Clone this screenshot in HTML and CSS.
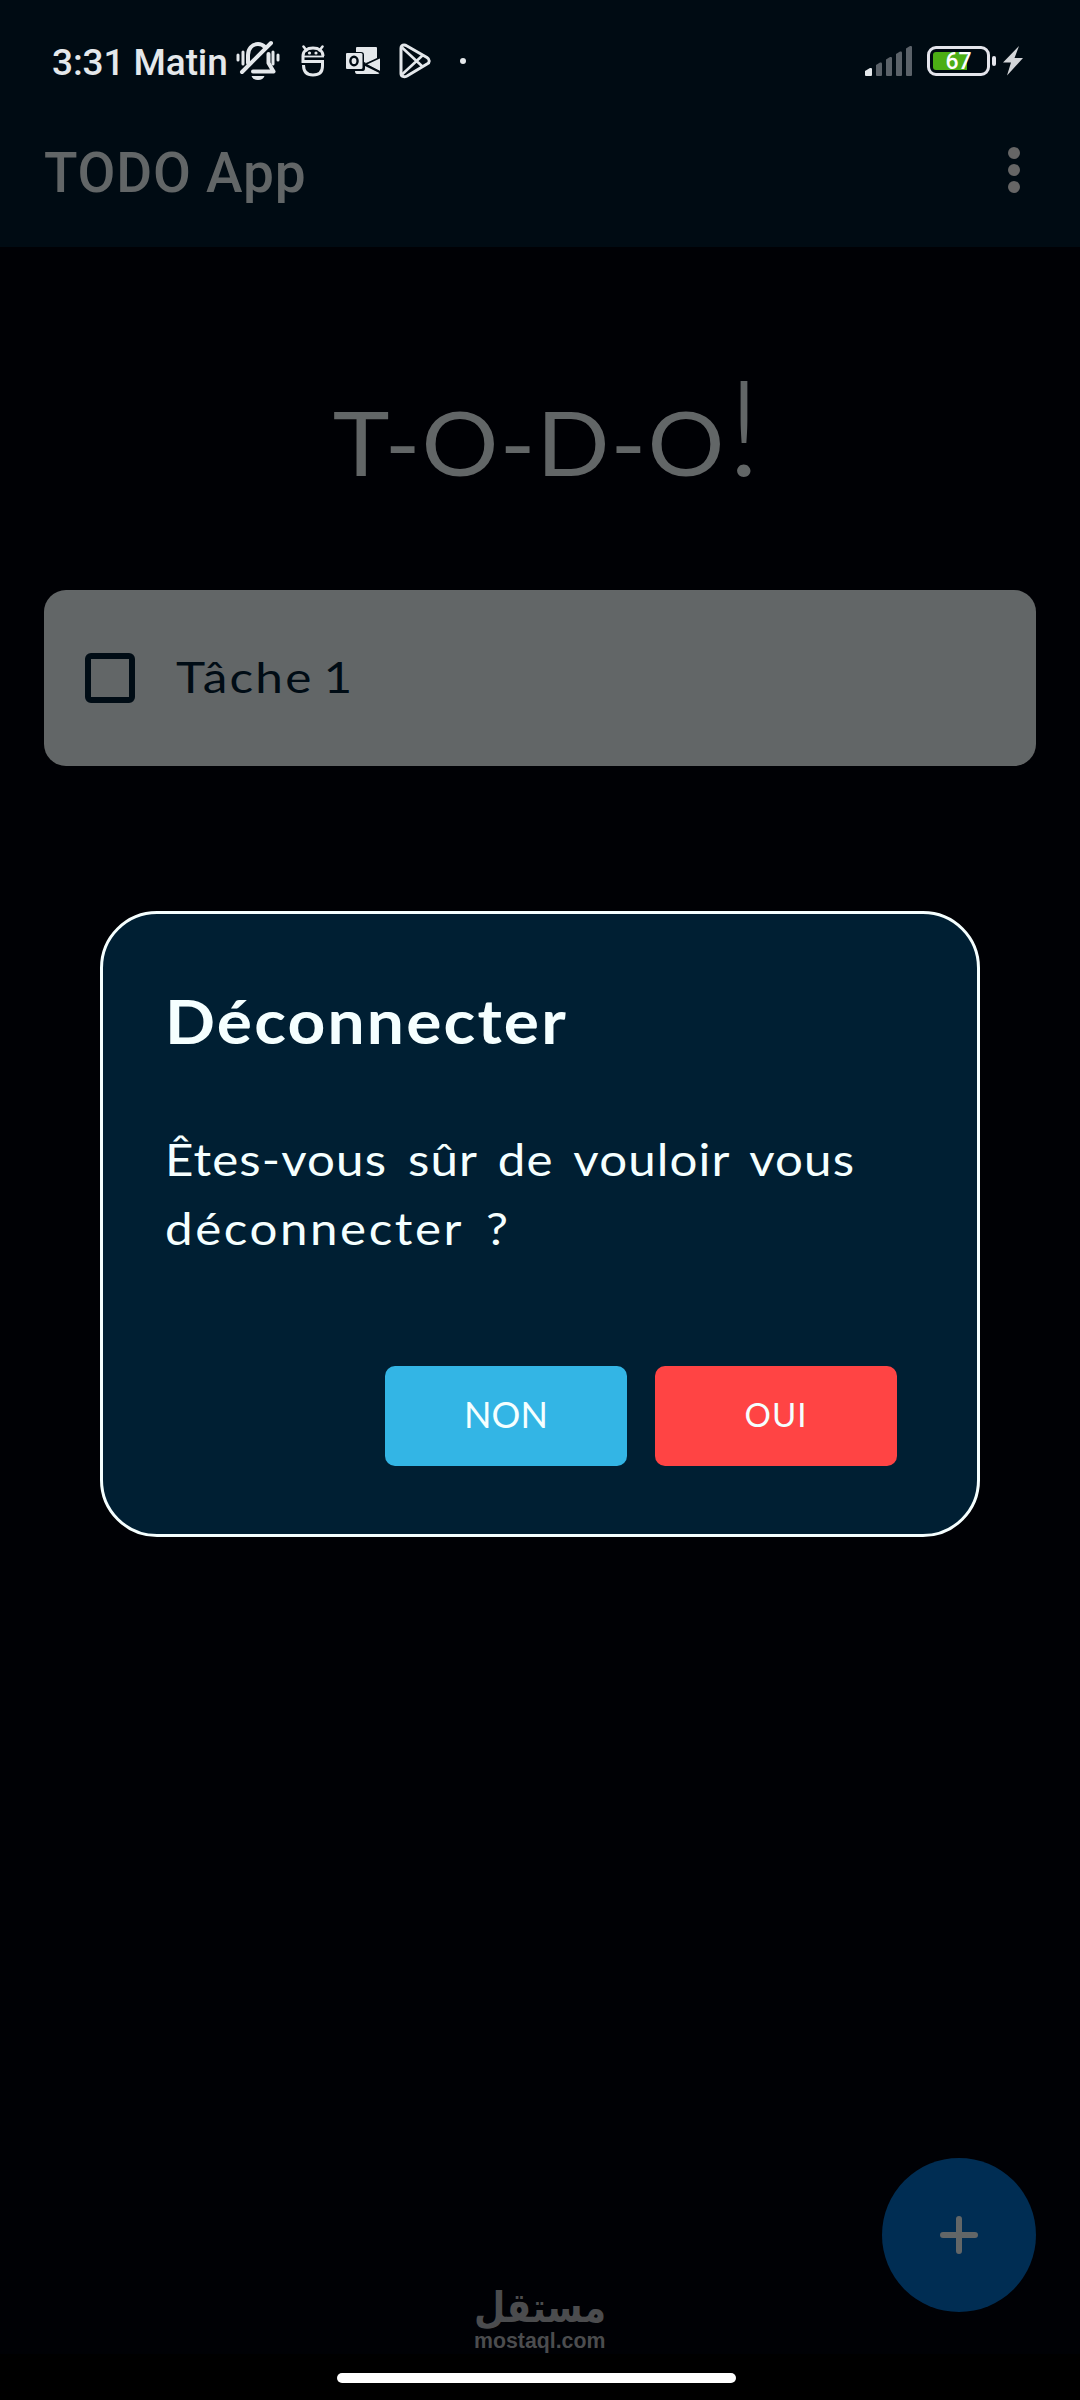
FILE: index.html
```html
<!DOCTYPE html>
<html lang="fr">
<head>
    <meta charset="UTF-8">
    <meta name="viewport" content="width=device-width, initial-scale=1.0">
    <title>TODO App</title>
    <link rel="stylesheet" href="styles.css">
</head>
<body>
    <div class="screen">
        <header class="header">
            <!-- Barre d'état -->
            <div class="status-bar">
                <div class="status-left">
                    <span class="clock">3:31 Matin</span>
                    <svg class="icon-bell" width="46" height="42" viewBox="0 0 46 42" fill="none" stroke="#e4e8eb" stroke-linecap="round">
                        <path d="M3 15v5M8 12v12M38 12v12M43 15v5" stroke-width="3"/>
                        <path d="M13 23v-8c0-6 4-11 10-11 3 0 5 1 7 3" stroke-width="4"/>
                        <path d="M33.500 14v9l5 8.500H18" stroke-width="4" stroke-linejoin="round"/>
                        <path d="M36 3L7 32" stroke-width="4"/>
                        <path d="M16.500 36h13c-1 2.500-3 4-6.500 4s-5.500-1.500-6.500-4z" fill="#e4e8eb" stroke="none"/>
                    </svg>
                    <svg class="icon-s" width="24" height="32" viewBox="0 0 24 32" fill="none" stroke="#e4e8eb">
                        <path d="M2.500 1.500l3 4M21.500 1.500l-3 4" stroke-width="2.500" stroke-linecap="round"/>
                        <path d="M22 11C22 6 18 3 12 3S2 6 2 11" stroke-width="3"/>
                        <path d="M1 11.500h22" stroke-width="1.800"/>
                        <path d="M2 11v5.500h19.500V21c0 6-3.500 9-9.500 9S2.500 27 2.500 20" stroke-width="3"/>
                        <circle cx="8.500" cy="8" r="1.600" fill="#e4e8eb" stroke="none"/>
                        <circle cx="15" cy="8" r="1.600" fill="#e4e8eb" stroke="none"/>
                    </svg>
                    <svg class="icon-mail" width="36" height="28" viewBox="0 0 36 28" fill="#e4e8eb">
                        <path d="M10 1q0-1 1-1h19q1 0 1 1v11l-11 4-2-1V8q0-3-3-3h-5z"/>
                        <path d="M1 6h14q1.500 0 1.500 1.500v13q0 1.500-1.500 1.500H1q-1 0-1-1V7q0-1 1-1z"/>
                        <path d="M34 11v13L18.500 16.500z"/>
                        <path d="M9 24h8q2 0 2-3v-2l14.500 7q-.5 1-2 1H11q-2 0-2-3z"/>
                        <path d="M18 16.500L34 25M18 18L34 10.500" stroke="#000b13" stroke-width="1.600"/>
                        <ellipse cx="8" cy="14" rx="3.600" ry="4.300" fill="none" stroke="#000b13" stroke-width="2.400"/>
                    </svg>
                    <svg class="icon-play" width="32" height="36" viewBox="0 0 32 36" fill="none" stroke="#e4e8eb" stroke-linejoin="round">
                        <path d="M2 5.500C2 2 5 1 8 3l20 11.500c3 2 3 5 0 6.500L8 33c-3 1.500-6 .5-6-2.500z" stroke-width="3"/>
                        <path d="M3 4.500L24 24M3 31.500L24 12" stroke-width="2.600"/>
                    </svg>
                    <span class="more-dot"></span>
                </div>
                <div class="status-right">
                    <svg class="icon-signal" width="48" height="32" viewBox="0 0 48 32" fill="#5b6269">
                        <path d="M0 26l5-3q2-.5 2 1v6q0 1-1 1H1q-1 0-1-1z" fill="#e4e8eb"/>
                        <path d="M11 20l4-2.500q2-.5 2 1V30q0 1-1 1h-4q-1 0-1-1z"/>
                        <path d="M21 14.500l4-2.500q2-.5 2 1v17q0 1-1 1h-4q-1 0-1-1z"/>
                        <path d="M31 9l4-2.500q2-.5 2 1V30q0 1-1 1h-4q-1 0-1-1z"/>
                        <path d="M41 3.500L45 1q2-.5 2 1v28q0 1-1 1h-4q-1 0-1-1z"/>
                    </svg>
                    <div class="battery">
                        <div class="battery-level"></div>
                        <span class="battery-text">67</span>
                    </div>
                    <span class="battery-cap"></span>
                    <svg class="icon-bolt" width="20" height="30" viewBox="0 0 20 30" fill="#d3d6d9">
                        <path d="M16 0L0 16.500h8L4 29.500 20 12h-8.500z"/>
                    </svg>
                </div>
            </div>
            <!-- Barre de titre -->
            <div class="toolbar">
                <h1 class="app-title">TODO App</h1>
                <div class="menu">
                    <span class="menu-dot"></span>
                    <span class="menu-dot"></span>
                    <span class="menu-dot"></span>
                </div>
            </div>
        </header>

        <main class="content">
            <h2 class="logo">T-O-D-O<span class="logo-mark">!</span></h2>
            <div class="task">
                <span class="checkbox"></span>
                <span class="task-name">Tâche 1</span>
            </div>
        </main>

        <div class="nav-bar">
            <span class="nav-handle"></span>
        </div>

        <button class="fab">
            <svg width="38" height="38" viewBox="0 0 38 38" stroke="#626667" stroke-width="6" stroke-linecap="round">
                <path d="M19 3v32M3 19h32"/>
            </svg>
        </button>

        <div class="watermark">
            <div class="watermark-ar" lang="ar">مستقل</div>
            <div class="watermark-en">mostaql.com</div>
        </div>

        <!-- Boîte de dialogue -->
        <div class="dialog">
            <h3 class="dialog-title">Déconnecter</h3>
            <p class="dialog-text"><span class="line-one">Êtes-vous sûr de vouloir vous</span><br><span class="line-two">déconnecter ?</span></p>
            <div class="dialog-actions">
                <button class="btn btn-non">NON</button>
                <button class="btn btn-oui">OUI</button>
            </div>
        </div>
    </div>
</body>
</html>
```

FILE: styles.css
```css
* {
    box-sizing: border-box;
}

body {
    margin: 0;
    background-color: #000105;
    font-family: Roboto, sans-serif;
}

h1, h2, h3, p {
    margin: 0;
    font-weight: normal;
}

button {
    border: none;
    padding: 0;
}

svg {
    display: block;
}

.screen {
    position: relative;
    width: 1080px;
    height: 2400px;
    display: flex;
    flex-direction: column;
    overflow: hidden;
}

/* En-tête */
.header {
    height: 247px;
    background-color: #000b13;
}

.status-bar {
    height: 122px;
    padding: 0 57px 0 52px;
    display: flex;
    justify-content: space-between;
    align-items: center;
}

.status-left,
.status-right {
    display: flex;
    align-items: center;
}

.status-right {
    padding-bottom: 1px;
}

.clock {
    width: 183px;
    font-size: 37px;
    font-weight: 500;
    color: #e4e8eb;
    white-space: nowrap;
    letter-spacing: -0.1px;
    padding-top: 3px;
}

.icon-s { margin-left: 20px; }
.icon-mail { margin-left: 21px; }
.icon-play { margin-left: 17px; }

.more-dot {
    width: 6px;
    height: 6px;
    margin-left: 29px;
    border-radius: 50%;
    background-color: #e4e8eb;
}

.battery {
    position: relative;
    width: 63px;
    height: 30px;
    margin-left: 14px;
    padding: 3px;
    border: 3px solid #e4e5ec;
    border-radius: 9px;
}

.battery-level {
    width: 34px;
    height: 18px;
    border-radius: 3px 0 0 3px;
    background-color: #4cae15;
}

.battery-text {
    position: absolute;
    inset: 0;
    line-height: 26px;
    text-align: center;
    font-size: 23px;
    font-weight: 500;
    color: #fff;
}

.battery-cap {
    width: 4px;
    height: 10px;
    margin-left: 2px;
    border-radius: 2px;
    background-color: #e4e5ec;
}

.icon-bolt { margin-left: 7px; }

.toolbar {
    height: 102px;
    padding: 0 60px 0 44px;
    display: flex;
    justify-content: space-between;
    align-items: center;
}

.app-title {
    font-size: 55px;
    font-weight: 500;
    color: #626667;
    letter-spacing: 0.8px;
}

.menu {
    display: flex;
    flex-direction: column;
    gap: 5px;
    margin-bottom: 6px;
}

.menu-dot {
    width: 12px;
    height: 12px;
    border-radius: 50%;
    background-color: #666;
}

/* Contenu */
.content {
    flex: 1;
    padding: 103px 44px 0;
}

.logo {
    height: 240px;
    line-height: 150px;
    text-align: center;
    font-family: Lato, sans-serif;
    font-size: 89px;
    color: #626667;
    letter-spacing: 1px;
    transform: scaleX(1.08);
}

.logo-mark {
    font-size: 134px;
    font-weight: 300;
    letter-spacing: 0;
    margin-right: -14px;
}

.task {
    height: 176px;
    padding-left: 41px;
    display: flex;
    align-items: center;
    border-radius: 22px;
    background-color: #626667;
}

.checkbox {
    width: 50px;
    height: 50px;
    border: 6px solid #000c15;
    border-radius: 6px;
}

.task-name {
    margin-left: 41px;
    padding-bottom: 3px;
    font-family: Lato, sans-serif;
    font-size: 42px;
    color: #000c15;
    letter-spacing: 1.8px;
    word-spacing: -4px;
    transform: scaleX(1.18);
    transform-origin: left;
}

/* Bouton flottant */
.fab {
    position: absolute;
    right: 44px;
    bottom: 88px;
    width: 154px;
    height: 154px;
    display: flex;
    align-items: center;
    justify-content: center;
    border-radius: 50%;
    background-color: #002d53;
}

.watermark {
    position: absolute;
    left: 474px;
    top: 2288px;
    width: 130px;
    color: #4b4c4e;
    font-weight: bold;
}

.watermark-ar {
    height: 41px;
    line-height: 41px;
    font-family: "DejaVu Sans", sans-serif;
    font-size: 38px;
    transform: scale(0.95, 1.1);
    transform-origin: left;
}

.watermark-en {
    font-family: "Liberation Sans", Arial, sans-serif;
    font-size: 21.3px;
    line-height: 24px;
    white-space: nowrap;
}

.nav-bar {
    height: 46px;
    padding-top: 19px;
    display: flex;
    justify-content: center;
    background-color: #000;
}

.nav-handle {
    width: 399px;
    height: 10px;
    margin-right: 7px;
    border-radius: 5px;
    background-color: #fff;
}

/* Boîte de dialogue */
.dialog {
    position: absolute;
    left: 100px;
    top: 911px;
    width: 880px;
    height: 626px;
    padding: 67px 80px 68px 62px;
    display: flex;
    flex-direction: column;
    border: 3px solid #f5ffff;
    border-radius: 57px;
    background-color: #001f33;
    font-family: Lato, sans-serif;
    color: #f5ffff;
}

.dialog-title {
    line-height: 80px;
    font-size: 61px;
    font-weight: bold;
    letter-spacing: 2px;
    transform: scaleX(1.08);
    transform-origin: left;
}

.dialog-text {
    margin-top: 64px;
    font-size: 44px;
    line-height: 69px;
    white-space: nowrap;
    transform: scaleX(1.12);
    transform-origin: left;
}

.line-one {
    letter-spacing: 1px;
    word-spacing: 6.300px;
}

.line-two {
    letter-spacing: 2.3px;
    word-spacing: 7px;
}

.dialog-actions {
    display: flex;
    justify-content: flex-end;
    gap: 28px;
    margin-top: auto;
}

.btn {
    width: 242px;
    height: 100px;
    padding-bottom: 5px;
    border-radius: 10px;
    font-family: Lato, sans-serif;
    font-size: 36px;
    color: #f5ffff;
}

.btn-non {
    background-color: #33b5e5;
}

.btn-oui {
    background-color: #ff4444;
    font-size: 33px;
    letter-spacing: 1px;
}
```
